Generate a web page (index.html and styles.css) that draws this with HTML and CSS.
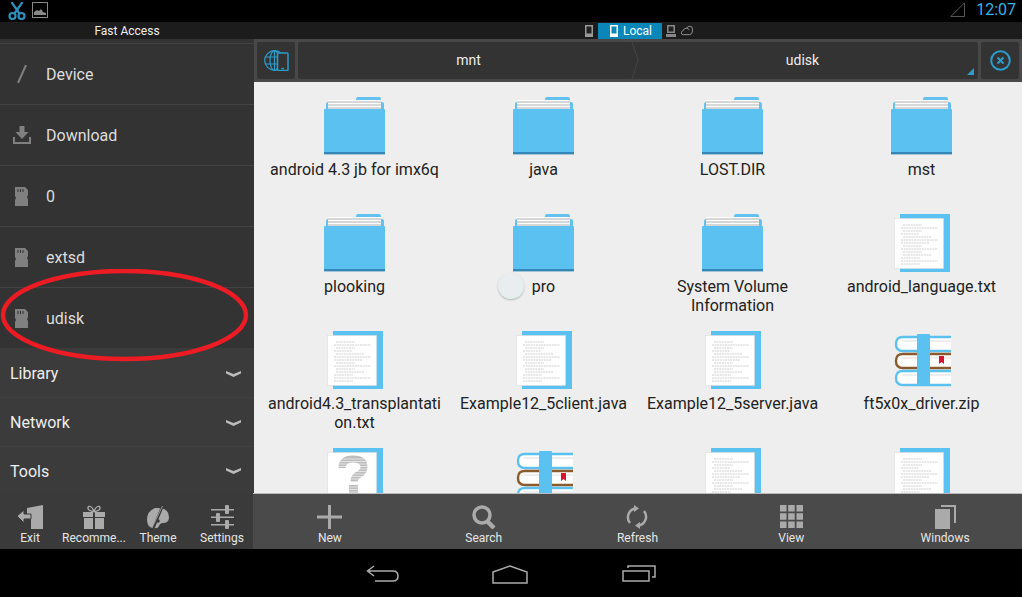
FILE: index.html
```html
<!DOCTYPE html>
<html lang="en">
<head>
  <meta charset="UTF-8">
  <meta name="viewport" content="width=device-width, initial-scale=1.0">
  <title>File Explorer</title>
  <link rel="stylesheet" href="styles.css">
</head>
<body>

<!-- shared file icons -->
<svg class="defs" width="0" height="0">
  <symbol id="folder" viewBox="0 0 62 58">
    <path d="M32 2q0-2 2-2h21q2 0 2 2v3h1q2 0 2 2v6H2V7q0-2 2-2h28z" fill="#62c1ee"/>
    <rect x="4" y="3" width="53" height="10" fill="#fff"/>
    <path d="M4 5h53M4 8h53M4 11h53" stroke="#9a9a9a" stroke-width=".8"/>
    <rect x="0" y="12" width="61" height="45" rx="1" fill="#5ac1f0"/>
    <rect x="0" y="55" width="61" height="2.400" fill="#3587b5"/>
  </symbol>
  <symbol id="doc" viewBox="-3 0 62 58">
    <rect x="6" y="0" width="50" height="58" fill="#5ac1f0"/>
    <rect x="0.5" y="4.500" width="49" height="50" fill="#fff" stroke="#ddd" stroke-width=".6"/>
    <path d="M9 11h19M7 14h37M9 17h19M7 20h18M9 23h28M7 26h37M7 29h28M9 32h19M7 35h37M9 38h19M9 41h28M7 44h19M7 47h37M7 50h19" stroke="#c4c4c4" stroke-width=".8" stroke-dasharray="2 .6"/>
  </symbol>
  <symbol id="help" viewBox="-3 0 62 58">
    <rect x="6" y="0" width="50" height="58" fill="#5ac1f0"/>
    <rect x="0.5" y="4.500" width="49" height="50" fill="#fff" stroke="#ddd" stroke-width=".6"/>
    <path d="M15 20q0-9 11-9t11 8q0 5-6 8-4 2-4 7" fill="none" stroke="#bdbdbd" stroke-width="7"/>
    <rect x="22" y="37" width="9" height="9" fill="#bdbdbd"/>
    <path d="M10 11h32M10 13.500h32M10 16h32M10 18.500h32M10 21h32M10 23.500h32M10 26h32M10 28.500h32M10 31h32M10 33.500h32M10 39h32M10 41.500h32M10 44h32" stroke="#fff" stroke-width=".6"/>
  </symbol>
  <symbol id="books" viewBox="-3 -4 62 58">
    <g fill="#fff" stroke-width="2.400">
      <path d="M57 2H9Q2 2 2 9t7 7h48" stroke="#5ac1f0"/>
      <path d="M57 19H9q-7 0-7 7t7 7h48" stroke="#8a5a2c"/>
      <path d="M57 36H9q-7 0-7 7t7 7h48" stroke="#5ac1f0"/>
    </g>
    <path d="M8 6h49M8 23h49M8 40h49" stroke="#ddd"/>
    <path d="M45 21h5v8l-2.500-2-2.500 2z" fill="#d8122f"/>
    <rect x="23" y="-1" width="13" height="52" rx="1" fill="#5ac1f0"/>
  </symbol>
</svg>

<div class="screen">

  <div class="status-bar">
    <div class="status-icons">
      <svg class="icon" width="18" height="18" viewBox="0 0 18 18" fill="none" stroke="#2f8fbc" stroke-width="2.200">
        <path d="M3.500 0l8 11.500M14.500 0l-8 11.500"/>
        <circle cx="4.500" cy="14" r="3"/>
        <circle cx="13.500" cy="14" r="3"/>
      </svg>
      <svg class="icon" width="16" height="16" viewBox="0 0 16 16">
        <rect x=".5" y=".5" width="15" height="15" fill="none" stroke="#888"/>
        <path d="M2 13V10l3-2 2 1 2-2 2 3 3 1v2z" fill="#888"/>
      </svg>
    </div>
    <div class="status-right">
      <svg class="icon" width="15" height="15" viewBox="0 0 15 15" fill="none" stroke="#555">
        <path d="M.8 14.500L14.500 .8v13.700z"/>
      </svg>
      <span class="clock">12:07</span>
    </div>
  </div>

  <div class="sub-bar">
    <div class="sub-title">Fast Access</div>
    <div class="sub-tabs">
      <svg class="icon" width="8" height="12" viewBox="0 0 8 12">
        <path d="M0 0h8v12H0z" fill="#999"/><path d="M1.500 1.500h5v7h-5z" fill="#222"/>
      </svg>
      <div class="local-tab">
        <svg class="icon" width="8" height="12" viewBox="0 0 8 12">
          <path d="M0 0h8v12H0z" fill="#fff"/><path d="M1.500 1.500h5v7h-5z" fill="#0a86b8"/>
        </svg>
        <span>Local</span>
      </div>
      <svg class="icon" width="10" height="12" viewBox="0 0 10 12">
        <path d="M1 0h8v8H1z" fill="#888"/><path d="M2.500 1.500h5v5h-5z" fill="#222"/><path d="M0 9h10v3H0z" fill="#888"/>
      </svg>
      <svg class="icon cloud" width="12" height="11" viewBox="0 0 13 11" fill="none" stroke="#999">
        <path d="M3 10H2.500a2 2 0 0 1-.5-4q1-3 4-3 1-2 3.500-2 3 0 3 3v2q-.5 4-3 4z"/>
        <path d="M6 3q2 0 3 2"/>
      </svg>
    </div>
  </div>

  <div class="workspace">

    <aside class="sidebar">
      <div class="places">
        <div class="place">
          <svg class="icon place-icon" width="18" height="18" viewBox="0 0 18 18" fill="none" stroke="#808080" stroke-width="2">
            <path d="M13 0L5 18"/>
          </svg>
          <span>Device</span>
        </div>
        <div class="place">
          <svg class="icon place-icon" width="18" height="18" viewBox="0 0 18 18" fill="#808080">
            <path d="M6.500 0h5v6h4L9 13 2.500 6h4z"/>
            <path d="M0 11h2v5h14v-5h2v7H0z"/>
          </svg>
          <span>Download</span>
        </div>
        <div class="place">
          <svg class="icon place-icon" width="18" height="19" viewBox="0 0 18 19">
            <path d="M2 0h10l3 3v5l-1 2 1 2v7H2v-6l1-2-1-2z" fill="#808080"/>
            <path d="M5 2v3M7.500 2v3M10 2v3" stroke="#333"/>
          </svg>
          <span>0</span>
        </div>
        <div class="place">
          <svg class="icon place-icon" width="18" height="19" viewBox="0 0 18 19">
            <path d="M2 0h10l3 3v5l-1 2 1 2v7H2v-6l1-2-1-2z" fill="#808080"/>
            <path d="M5 2v3M7.500 2v3M10 2v3" stroke="#333"/>
          </svg>
          <span>extsd</span>
        </div>
        <div class="place">
          <svg class="icon place-icon" width="18" height="19" viewBox="0 0 18 19">
            <path d="M2 0h10l3 3v5l-1 2 1 2v7H2v-6l1-2-1-2z" fill="#808080"/>
            <path d="M5 2v3M7.500 2v3M10 2v3" stroke="#333"/>
          </svg>
          <span>udisk</span>
        </div>
      </div>

      <div class="sections">
        <div class="section">
          <span>Library</span>
          <svg class="icon" width="15" height="6" viewBox="0 0 15 6"><path d="M0 0l7.500 3L15 0v2.500L7.500 6 0 2.500z" fill="#bbb"/></svg>
        </div>
        <div class="section">
          <span>Network</span>
          <svg class="icon" width="15" height="6" viewBox="0 0 15 6"><path d="M0 0l7.500 3L15 0v2.500L7.500 6 0 2.500z" fill="#bbb"/></svg>
        </div>
        <div class="section">
          <span>Tools</span>
          <svg class="icon" width="15" height="6" viewBox="0 0 15 6"><path d="M0 0l7.500 3L15 0v2.500L7.500 6 0 2.500z" fill="#bbb"/></svg>
        </div>
      </div>

      <div class="side-tools">
        <div class="tool">
          <svg class="icon" width="26" height="24" viewBox="0 0 26 24" fill="#aaa">
            <path d="M10 3l16-3v24H14V11h-4z"/>
            <path d="M0 11l7-6v4h7v5H7v4z" stroke="#3a3a3a"/>
          </svg>
          <span>Exit</span>
        </div>
        <div class="tool">
          <svg class="icon" width="22" height="24" viewBox="0 0 22 24" fill="#aaa">
            <path d="M0 7h10v5H0zM12 7h10v5H12zM1 13h9v11H1zM12 13h9v11h-9z"/>
            <path d="M11 6.500C7 6.500 4.500 4.500 5 2.500S9 .5 11 6.500C13 .5 16.500 .5 17 2.500s-2 4-6 4z" fill="none" stroke="#aaa" stroke-width="1.300"/>
          </svg>
          <span>Recomme...</span>
        </div>
        <div class="tool">
          <svg class="icon" width="22" height="24" viewBox="0 0 22 24">
            <path d="M8 3q14-1 14 9 0 6-6 6-3 0-4 3-1 3-6 2Q0 22 0 15 0 6 8 3z" fill="#aaa"/>
            <path d="M16 0L6 24" stroke="#3a3a3a" stroke-width="2.500"/>
            <path d="M15.500 1L5 23" stroke="#aaa" stroke-width=".8"/>
            <circle cx="11" cy="16" r="1.800" fill="#3a3a3a"/>
          </svg>
          <span>Theme</span>
        </div>
        <div class="tool">
          <svg class="icon" width="23" height="24" viewBox="0 0 23 24" fill="#aaa">
            <path d="M0 4h23v1.500H0zM0 11.500h23V13H0zM0 19h23v1.500H0z"/>
            <rect x="14" y="0" width="4" height="9" rx="1"/>
            <rect x="5" y="8" width="4" height="9" rx="1"/>
            <rect x="14" y="15" width="4" height="9" rx="1"/>
          </svg>
          <span>Settings</span>
        </div>
      </div>
    </aside>

    <main class="main">
      <div class="path-bar">
        <div class="path-btn">
          <svg class="icon" width="25" height="21" viewBox="0 0 25 21" fill="none" stroke="#2c9ccb" stroke-width="1.200">
            <circle cx="10.500" cy="10.500" r="9.800"/>
            <ellipse cx="10.500" cy="10.500" rx="4.500" ry="9.800"/>
            <path d="M10.500 .7v19.600M1.500 7h18M1.500 14h18"/>
            <rect x="13.500" y="3" width="10.500" height="17.500" rx="1" fill="#333" stroke-width="1.500"/>
            <path d="M17.500 18.500h2.500" stroke-width="1.500"/>
          </svg>
        </div>
        <div class="crumbs">
          <div class="crumb crumb-first">mnt</div>
          <svg class="crumb-arrow" width="8" height="37" viewBox="0 0 8 37" fill="none" stroke="#454545">
            <path d="M1 0l6 18.500L1 37"/>
          </svg>
          <div class="crumb crumb-last">udisk</div>
          <div class="crumb-corner"></div>
        </div>
        <div class="path-btn">
          <svg class="icon" width="21" height="21" viewBox="0 0 21 21" fill="none" stroke="#2c9ccb">
            <circle cx="10.500" cy="10.500" r="9.300" stroke-width="2"/>
            <path d="M7.500 7.500l6 6M13.500 7.500l-6 6" stroke-width="2"/>
          </svg>
        </div>
      </div>

      <div class="files">
        <div class="file"><svg class="file-icon"><use href="#folder"/></svg><span class="file-name">android 4.3 jb for imx6q</span></div>
        <div class="file"><svg class="file-icon"><use href="#folder"/></svg><span class="file-name">java</span></div>
        <div class="file"><svg class="file-icon"><use href="#folder"/></svg><span class="file-name">LOST.DIR</span></div>
        <div class="file"><svg class="file-icon"><use href="#folder"/></svg><span class="file-name">mst</span></div>
        <div class="file"><svg class="file-icon"><use href="#folder"/></svg><span class="file-name">plooking</span></div>
        <div class="file"><svg class="file-icon"><use href="#folder"/></svg><span class="file-name">pro</span></div>
        <div class="file"><svg class="file-icon"><use href="#folder"/></svg><span class="file-name">System Volume Information</span></div>
        <div class="file"><svg class="file-icon"><use href="#doc"/></svg><span class="file-name">android_language.txt</span></div>
        <div class="file"><svg class="file-icon"><use href="#doc"/></svg><span class="file-name">android4.3_transplantation.txt</span></div>
        <div class="file"><svg class="file-icon"><use href="#doc"/></svg><span class="file-name">Example12_5client.java</span></div>
        <div class="file"><svg class="file-icon"><use href="#doc"/></svg><span class="file-name">Example12_5server.java</span></div>
        <div class="file"><svg class="file-icon"><use href="#books"/></svg><span class="file-name">ft5x0x_driver.zip</span></div>
        <div class="file"><svg class="file-icon"><use href="#help"/></svg></div>
        <div class="file"><svg class="file-icon"><use href="#books"/></svg></div>
        <div class="file"><svg class="file-icon"><use href="#doc"/></svg></div>
        <div class="file"><svg class="file-icon"><use href="#doc"/></svg></div>
      </div>

      <div class="main-tools">
        <div class="tool">
          <svg class="icon" width="25" height="24" viewBox="0 0 25 24" fill="#aaa"><path d="M11 0h3v10.500h11v3H14V24h-3V13.500H0v-3h11z"/></svg>
          <span>New</span>
        </div>
        <div class="tool">
          <svg class="icon" width="24" height="24" viewBox="0 0 24 24" fill="none" stroke="#aaa">
            <circle cx="10" cy="10" r="8" stroke-width="3.500"/>
            <path d="M15 16l7 7" stroke-width="4.500"/>
          </svg>
          <span>Search</span>
        </div>
        <div class="tool">
          <svg class="icon" width="22" height="24" viewBox="0 0 22 24" fill="none" stroke="#aaa" stroke-width="2.500">
            <path d="M4 18a9 9 0 0 1 5-14.500M18 6a9 9 0 0 1-5 14.500"/>
            <path d="M8 0l5 3.500-5 3.500zM14 24l-5-3.500 5-3.500z" fill="#aaa" stroke="none"/>
          </svg>
          <span>Refresh</span>
        </div>
        <div class="tool">
          <svg class="icon" width="23" height="23" viewBox="0 0 23 23" fill="#aaa">
            <path d="M0 0h6.500v6.500H0zM8.200 0h6.500v6.500H8.200zM16.500 0H23v6.500h-6.500zM0 8.200h6.500v6.500H0zM8.200 8.200h6.500v6.500H8.200zM16.500 8.200H23v6.500h-6.500zM0 16.500h6.500V23H0zM8.200 16.500h6.500V23H8.200zM16.500 16.500H23V23h-6.500z"/>
          </svg>
          <span>View</span>
        </div>
        <div class="tool">
          <svg class="icon" width="21" height="24" viewBox="0 0 21 24" fill="#aaa">
            <path d="M6 0h15v18h-2V2H6z"/>
            <path d="M0 4h15v20H0z"/>
          </svg>
          <span>Windows</span>
        </div>
      </div>
    </main>
  </div>

  <div class="nav-bar">
    <svg class="icon" width="33" height="17" viewBox="0 0 33 17" fill="none" stroke="#aaa" stroke-width="1.500">
      <path d="M8 1L1.500 6 8 11M2 6h25q5 0 5 5t-5 5H9"/>
    </svg>
    <svg class="icon" width="37" height="19" viewBox="0 0 37 19" fill="none" stroke="#aaa" stroke-width="1.500">
      <path d="M1 7L18 1l17 6v11H1z"/>
    </svg>
    <svg class="icon" width="34" height="17" viewBox="0 0 34 17" fill="none" stroke="#aaa" stroke-width="1.500">
      <path d="M1 6h26v10H1zM6 3V1h27v11h-3"/>
    </svg>
  </div>

  <!-- annotation drawn over the screenshot -->
  <svg class="scribble" width="254" height="100" viewBox="0 0 254 100" fill="none">
    <ellipse cx="124.500" cy="46" rx="121.500" ry="44" stroke="#ed1c24" stroke-width="4.500"/>
  </svg>
  <div class="touch-dot"></div>
</div>

</body>
</html>
```

FILE: styles.css
```css
* {
  box-sizing: border-box;
}

body {
  margin: 0;
  padding: 0;
  font-family: Roboto, "Liberation Sans", sans-serif;
  overflow: hidden;
  background: #000;
}

.defs {
  position: absolute;
}

.icon {
  display: block;
  flex: none;
}

.screen {
  position: relative;
  display: flex;
  flex-direction: column;
  width: 1022px;
  height: 597px;
  overflow: hidden;
}

/* Status bar */
.status-bar {
  display: flex;
  justify-content: space-between;
  align-items: flex-start;
  height: 22px;
  padding: 2px 6px 0 8px;
  background: #000;
}

.status-icons {
  display: flex;
  gap: 6px;
}

.status-right {
  display: flex;
  gap: 11px;
}

.clock {
  font-size: 16px;
  line-height: 15px;
  color: #33b5e5;
}

/* Fast access / local strip */
.sub-bar {
  display: flex;
  height: 17px;
  background: #1c1c1c;
  color: #eee;
  font-size: 12px;
}

.sub-title {
  width: 254px;
  text-align: center;
  line-height: 19px;
}

.sub-tabs {
  display: flex;
  align-items: center;
  gap: 4px;
  margin-left: 331px;
}

.local-tab {
  display: flex;
  align-items: center;
  gap: 5px;
  width: 64px;
  height: 16px;
  margin-left: 1px;
  padding-left: 12px;
  background: #0a86b8;
  color: #fff;
  font-size: 12px;
  line-height: 18px;
}

.cloud {
  margin-left: 1px;
}

/* Workspace */
.workspace {
  display: flex;
  height: 510px;
}

.sidebar {
  display: flex;
  flex-direction: column;
  width: 254px;
  background: #333;
  color: #ddd;
  font-size: 16px;
}

.places {
  padding-top: 4px;
}

.place {
  display: flex;
  align-items: center;
  gap: 15px;
  height: 61px;
  padding: 0 0 0 13px;
  border-top: 1px solid #434343;
}

.place-icon {
  width: 18px;
}

.sections {
  flex: 1;
  display: flex;
  flex-direction: column;
  background: #3b3b3b;
  color: #eee;
}

.section {
  flex: none;
  height: 49px;
  display: flex;
  justify-content: space-between;
  align-items: center;
  padding: 1px 13px 0 10px;
  border-top: 1px solid #414141;
}

.section:first-child {
  border-top-color: #3b3b3b;
}

.section:last-child {
  height: 48px;
}

.side-tools {
  flex: none;
  display: grid;
  grid-template-columns: repeat(4, 64px);
  height: 55px;
  margin-left: -2px;
  background: #3a3a3a;
}

.tool {
  flex: 1 1 0;
  min-width: 0;
  display: flex;
  flex-direction: column;
  justify-content: space-between;
  align-items: center;
  height: 100%;
  padding: 11px 0 4px;
  font-size: 12px;
  line-height: 14px;
  color: #e6e6e6;
  white-space: nowrap;
}

/* Main column */
.main {
  flex: 1;
  min-width: 0;
  display: flex;
  flex-direction: column;
}

.path-bar {
  display: flex;
  gap: 3px;
  height: 43px;
  padding: 3px;
  background: #484848;
}

.path-btn {
  display: flex;
  justify-content: center;
  align-items: center;
  width: 38px;
  background: #333;
  border-radius: 2px;
}

.crumbs {
  position: relative;
  flex: 1;
  display: flex;
  background: #333;
  border-radius: 2px;
  color: #eee;
  font-size: 14px;
}

.crumb {
  text-align: center;
  line-height: 37px;
}

.crumb-first {
  flex: none;
  width: 333px;
  padding-left: 8px;
}

.crumb-last {
  flex: 1;
  padding-right: 12px;
}

.crumb-arrow {
  flex: none;
}

.crumb-corner {
  position: absolute;
  right: 4px;
  bottom: 4px;
  border-left: 7px solid transparent;
  border-bottom: 7px solid #2c9ccb;
}

.files {
  flex: 1;
  min-height: 0;
  overflow: hidden;
  display: grid;
  grid-template-columns: repeat(4, 189px);
  grid-auto-rows: 117px;
  padding: 15px 0 0 6px;
  background: #eee;
}

.file {
  display: flex;
  flex-direction: column;
  align-items: center;
}

.file-icon {
  flex: none;
  width: 62px;
  height: 58px;
}

.file-name {
  width: 178px;
  margin-top: 5px;
  font-size: 16px;
  line-height: 19px;
  color: #222;
  text-align: center;
  overflow-wrap: anywhere;
}

.main-tools {
  display: flex;
  flex: none;
  height: 56px;
  margin-left: -1px;
  border-top: 1px solid #bbb;
  background: #4a4a4a;
}

/* Android buttons */
.nav-bar {
  flex: 1;
  display: flex;
  align-items: flex-start;
  gap: 93px;
  padding: 16px 0 0 366px;
  background: #000;
}

/* Overlays */
.scribble {
  position: absolute;
  left: 0;
  top: 269px;
}

.touch-dot {
  position: absolute;
  left: 498px;
  top: 273px;
  width: 26px;
  height: 26px;
  border-radius: 50%;
  background: #e8eef0;
  box-shadow: 0 1px 2px rgba(0, 0, 0, 0.25);
}
```
